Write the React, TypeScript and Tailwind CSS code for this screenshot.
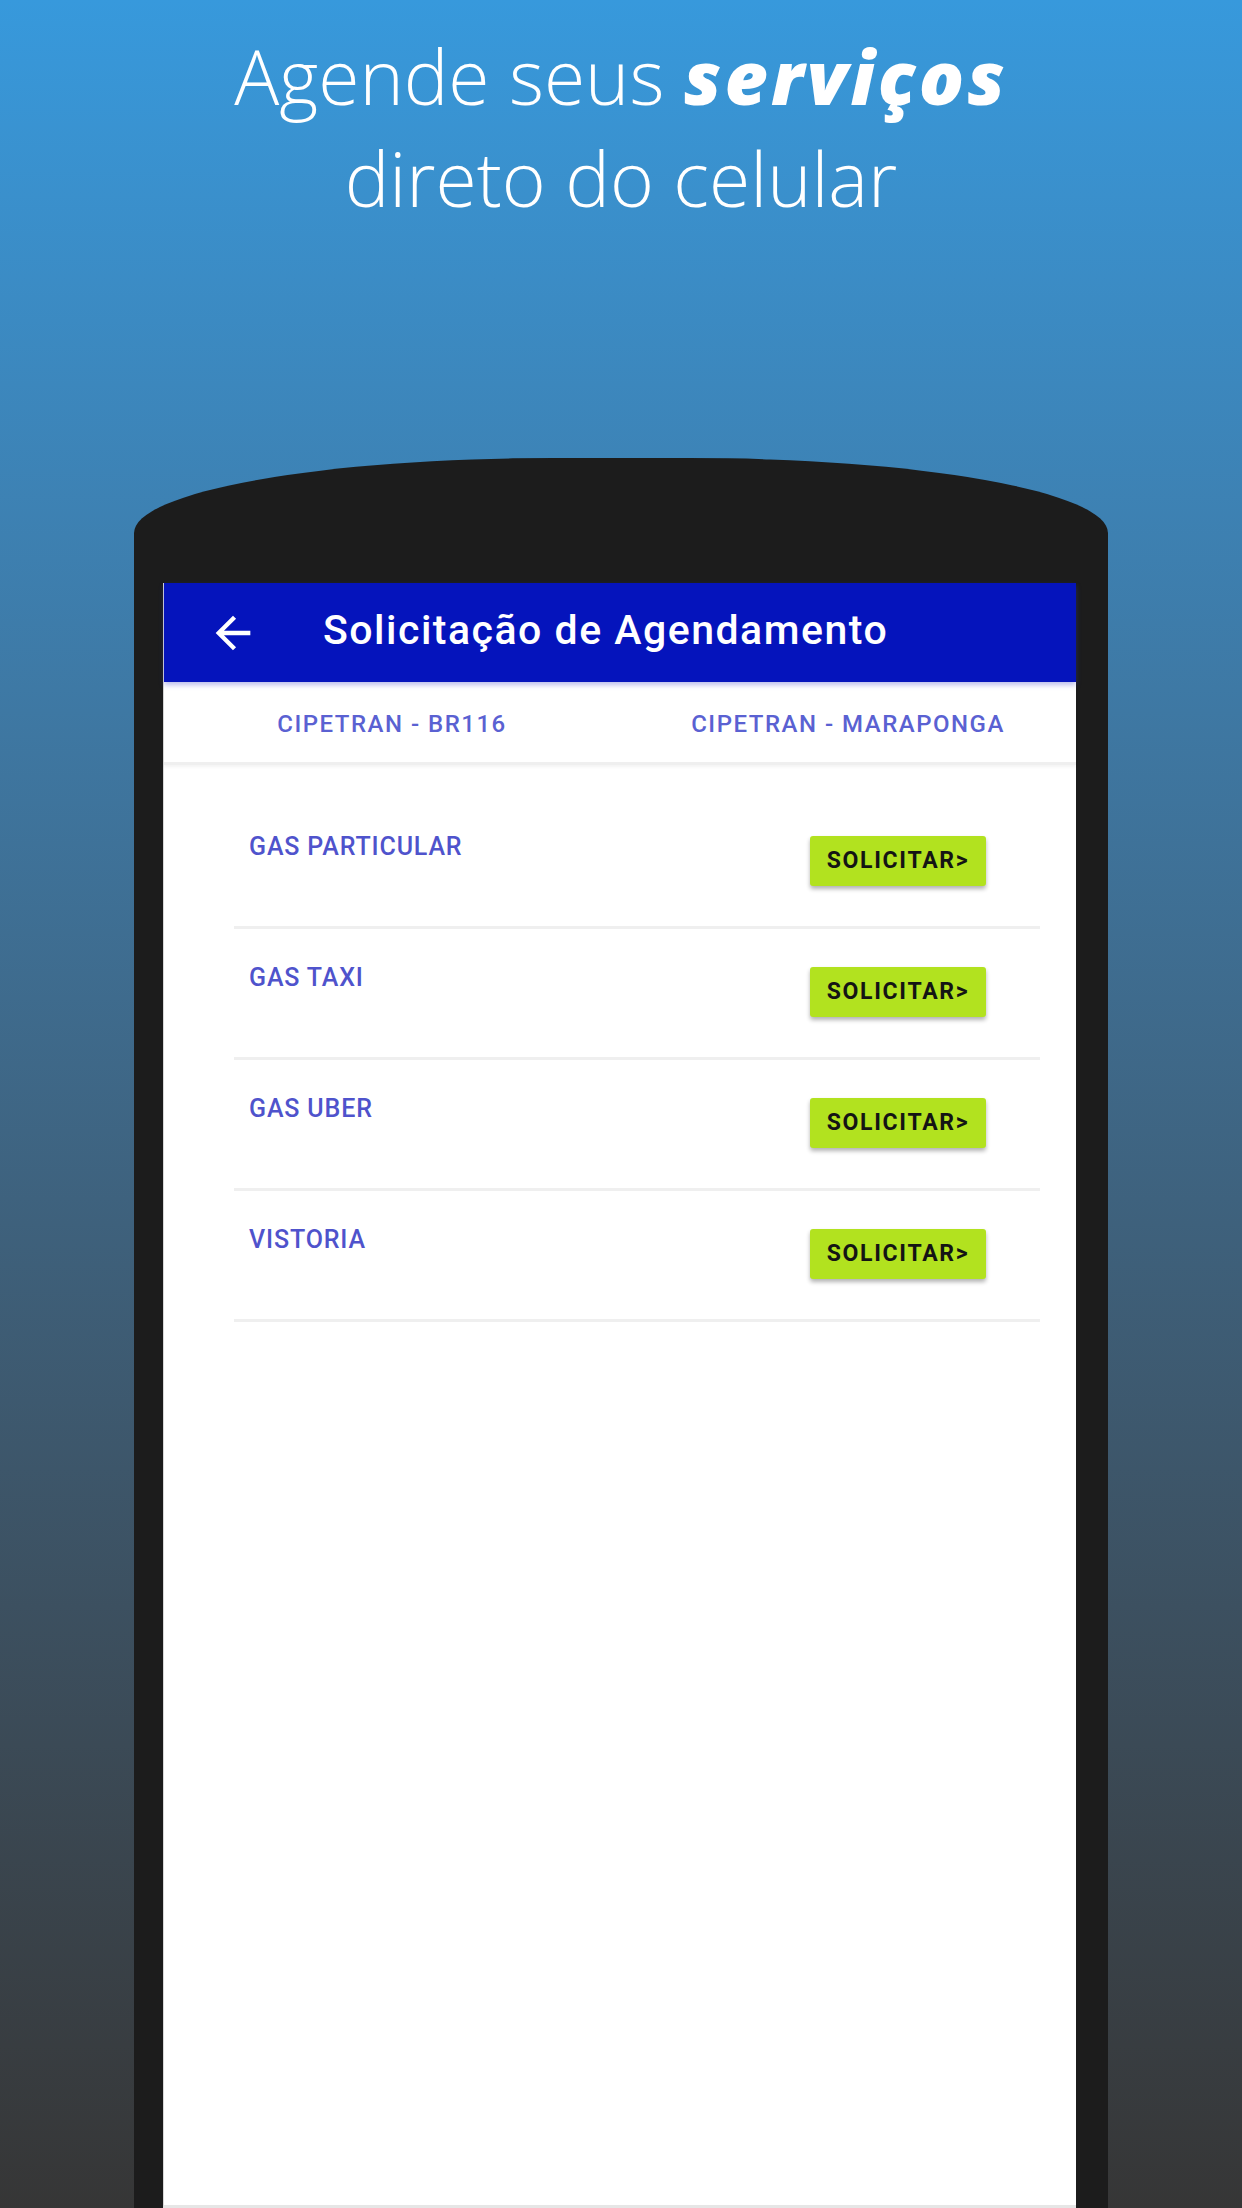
const SERVICES = ['GAS PARTICULAR', 'GAS TAXI', 'GAS UBER', 'VISTORIA']

const TABS = ['CIPETRAN - BR116', 'CIPETRAN - MARAPONGA']

export default function App() {
  return (
    <div className="w-[1242px] h-[2208px] overflow-hidden flex flex-col items-center bg-linear-to-b from-[#3799dc] to-[#363636]">
      {/* ── Headline ─────────────────────────────── */}
      <h1 className="pt-[25px] text-center text-white font-['Open_Sans',sans-serif] font-light text-[75px] leading-[102px]">
        Agende seus <span className="font-extrabold italic tracking-[3px]">serviços</span>
        <br />
        direto do celular
      </h1>

      {/* ── Phone frame ──────────────────────────── */}
      <div className="mt-[229px] w-[974px] flex-1 flex flex-col bg-[#1c1c1c] rounded-t-[420px_75px] pt-[125px] pl-[29px] pr-[32px]">
        <div className="flex-1 flex flex-col bg-white border-l border-[#d8d8d8] border-b-[3px] border-b-[#e6e6e6] font-['Roboto',sans-serif]">
          {/* App bar */}
          <div className="relative h-[99px] flex items-center bg-[#0514bc] shadow-[0_3px_5px_rgba(60,70,200,0.35)]">
            <svg className="ml-[43px] w-[52px] h-[52px]" viewBox="0 0 24 24" fill="white">
              <path d="M20 11H7.83l5.59-5.59L12 4l-8 8 8 8 1.41-1.41L7.83 13H20v-2z" />
            </svg>
            <span className="ml-[64px] -mt-[4px] text-white text-[41px] font-medium tracking-[1.5px]">
              Solicitação de Agendamento
            </span>
          </div>

          {/* Tabs */}
          <div className="h-[83px] flex border-b-[3px] border-[#efefef] shadow-[0_2px_3px_rgba(0,0,0,0.05)]">
            {TABS.map((t) => (
              <div key={t} className="flex-1 flex items-center justify-center pt-[4px] text-[24px] font-medium text-[#5a61d2] tracking-[1.5px]">
                {t}
              </div>
            ))}
          </div>

          {/* Service list */}
          <div className="pt-[33px] pl-[70px] pr-[36px]">
            {SERVICES.map((s) => (
              <div key={s} className="flex items-start justify-between pt-[38px] pb-[40px] border-b-[3px] border-[#efefef]">
                <span className="pl-[15px] -mt-[3px] text-[25px] leading-[28px] font-medium text-[#4f53cc] tracking-[0.85px]">{s}</span>
                <button className="mr-[54px] w-[176px] h-[50px] flex items-center justify-center rounded-[3px] bg-[#b2e21f] shadow-[0_3px_4px_rgba(0,0,0,0.3)] text-[23px] font-bold text-[#141414] tracking-[1.7px]">
                  SOLICITAR&gt;
                </button>
              </div>
            ))}
          </div>
        </div>
      </div>
    </div>
  )
}
